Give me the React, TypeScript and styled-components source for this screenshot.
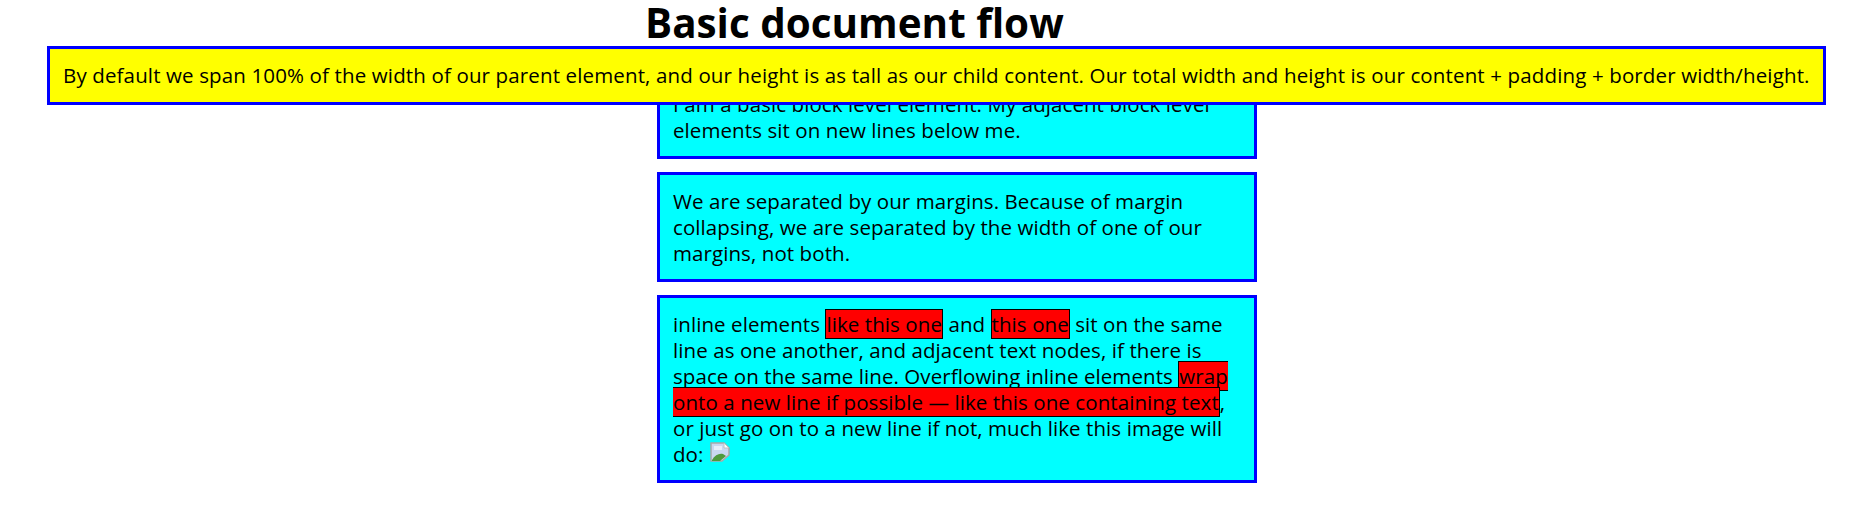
import React from "react";
import styled, { createGlobalStyle } from "styled-components";

const Global = createGlobalStyle`
  html, body { margin: 0; padding: 0; background: #fff; }
  body { font-family: "Open Sans", "Noto Sans", sans-serif; font-size: 20.5px; line-height: 26px; color: #000; }
`;

const Page = styled.div`
  width: 600px;
  margin-left: 657px;
  padding-bottom: 28px;
`;

const Title = styled.h1`
  margin: 0 0 29px -12px;
  height: 46px;
  font-size: 40.4px;
  line-height: 46px;
  font-weight: 700;
  white-space: nowrap;
`;

const Block = styled.p`
  margin: 0 0 13px;
  padding: 13px;
  border: 3px solid #0000ff;
  background: #00ffff;
  letter-spacing: 0.08px;
`;

const Floating = styled.p`
  position: absolute;
  top: 46px;
  left: 47px;
  width: 1779px;
  height: 59px;
  box-sizing: border-box;
  margin: 0;
  padding: 13px;
  border: 3px solid #0000ff;
  background: #ffff00;
  letter-spacing: 0.137px;
  white-space: nowrap;
`;

const Inline = styled.span`
  background: #ff0000;
  border: 1px solid #000;
`;

const BrokenImage = styled.svg`
  width: 20px;
  height: 20px;
  margin-left: 1px;
  vertical-align: baseline;
`;

export default function App() {
  return (
    <>
      <Global />
      <Page>
        <Title>Basic document flow</Title>
        <Block>I am a basic block level element. My adjacent block level elements sit on new lines below me.</Block>
        <Block>We are separated by our margins. Because of margin collapsing, we are separated by the width of one of our margins, not both.</Block>
        <Block>
          inline elements <Inline>like this one</Inline> and <Inline>this one</Inline> sit on the same line as one another, and adjacent text nodes, if there is space on the same line. Overflowing inline elements <Inline>wrap onto a new line if possible — like this one containing text</Inline>, or just go on to a new line if not, much like this image will do:{" "}
          <BrokenImage viewBox="0 0 20 20" aria-hidden="true">
            <path d="M1 1H14L19 6V13L12 19H1Z" fill="#c9d8f0" stroke="#a8a8a8" strokeWidth="1.5" />
            <path d="M14 1V6H19Z" fill="#ffffff" stroke="#c0c0c0" />
            <path d="M2 19V18C5 13 9 11 13 12L16 14L10 19Z" fill="#4e9a3c" />
            <path d="M4 4H12V8H4Z" fill="#e8eff9" />
          </BrokenImage>
        </Block>
      </Page>
      <Floating>By default we span 100% of the width of our parent element, and our height is as tall as our child content. Our total width and height is our content + padding + border width/height.</Floating>
    </>
  );
}
